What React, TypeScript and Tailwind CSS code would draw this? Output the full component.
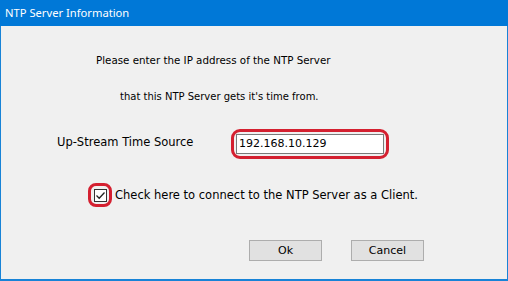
export default function App() {
  const body = "font-['DejaVu_Sans',sans-serif] text-[11px] leading-[14px] text-black";

  return (
    <div className="flex h-[281px] w-[508px] flex-col bg-[#1883d7]">
      <div className="flex h-[26px] items-center bg-[#0078d7] pl-[5px] font-['Noto_Sans',sans-serif] text-[11.2px] text-white">
        NTP Server Information
      </div>

      <div className={`mx-[1px] mb-[2px] flex flex-1 flex-col bg-[#f0f0f0] ${body}`}>
        <p className="mt-[27px] pl-[95px] text-[10.3px]">Please enter the IP address of the NTP Server</p>
        <p className="mt-[23px] pl-[119px] text-[10px]">that this NTP Server gets it's time from.</p>

        <div className="mt-[25px] flex items-center pl-[56px]">
          <span className="w-[174px] -translate-y-[2px] text-[11.5px]">Up-Stream Time Source</span>
          <div className="rounded-[9px] border-[3px] border-[#d42030] p-[2px]">
            <div className="flex h-[20px] w-[148px] items-center border border-[#7a7a7a] bg-white pl-[2px]">
              192.168.10.129
            </div>
          </div>
        </div>

        <div className="mt-[24px] flex items-center pl-[87px]">
          <div className="flex h-[24px] w-[24px] items-center justify-center rounded-[8px] border-[3px] border-[#d42030]">
            <div className="flex h-[13px] w-[13px] items-center justify-center border border-[#333333] bg-white">
              <svg width="11" height="11" viewBox="0 0 11 11" fill="none">
                <path d="M1.5 5.5 L4.2 8.2 L9.5 2.5" stroke="#222222" strokeWidth="1.3" />
              </svg>
            </div>
          </div>
          <span className="ml-[3px] text-[11.5px]">Check here to connect to the NTP Server as a Client.</span>
        </div>

        <div className="mt-[33px] flex gap-[29px] pl-[248px]">
          <button className="h-[21px] w-[73px] border border-[#adadad] bg-[#e1e1e1]">Ok</button>
          <button className="h-[21px] w-[73px] border border-[#adadad] bg-[#e1e1e1]">Cancel</button>
        </div>
      </div>
    </div>
  );
}
